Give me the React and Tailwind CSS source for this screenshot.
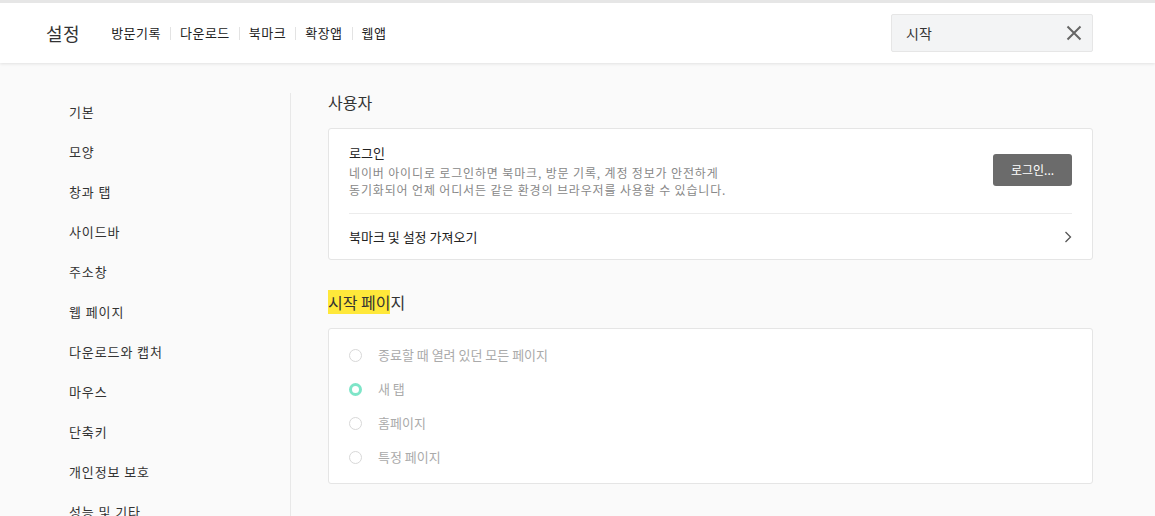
import React, { useState } from 'react';

const font = { fontFamily: '"Noto Sans CJK KR", "Noto Sans", sans-serif' };

const navItems = ['방문기록', '다운로드', '북마크', '확장앱', '웹앱'];
const sideItems = ['기본', '모양', '창과 탭', '사이드바', '주소창', '웹 페이지', '다운로드와 캡처', '마우스', '단축키', '개인정보 보호', '성능 및 기타'];
const startOptions = ['종료할 때 열려 있던 모든 페이지', '새 탭', '홈페이지', '특정 페이지'];

export default function App() {
  const [query, setQuery] = useState('시작');
  const [start, setStart] = useState(1);

  return (
    <div className="w-[1155px] h-[516px] overflow-hidden bg-[#fafafa] text-[#222]" style={font}>
      {/* Header */}
      <div className="h-[63px] bg-white border-t-[3px] border-[#e6e6e6] shadow-[0_1px_3px_rgba(0,0,0,0.1)] flex items-center pl-[46px] pr-[62px] relative z-10">
        <h1 className="text-[18px] text-[#333] mr-[31px] leading-none tracking-[0.5px]">설정</h1>
        <nav className="flex items-center text-[13px] text-[#222] tracking-[0.5px]">
          {navItems.map((n, i) => (
            <React.Fragment key={n}>
              {i > 0 && <span className="w-px h-[13px] bg-[#e3e3e3] mx-[9px]" />}
              <span className="cursor-pointer">{n}</span>
            </React.Fragment>
          ))}
        </nav>
        <div className="ml-auto w-[202px] h-[38px] bg-[#f3f4f5] border border-[#e6e6e6] rounded-[2px] flex items-center pl-[14px] pr-[8px]">
          <input
            value={query}
            onChange={(e) => setQuery(e.target.value)}
            className="flex-1 bg-transparent outline-none text-[14px] text-[#333] min-w-0"
            style={font}
          />
          <button onClick={() => setQuery('')} className="w-[20px] h-[20px] flex items-center justify-center text-[#666]">
            <svg width="16" height="16" viewBox="0 0 16 16" fill="none" stroke="currentColor" strokeWidth="2">
              <path d="M1.5 1.5 L14.5 14.5 M14.5 1.5 L1.5 14.5" />
            </svg>
          </button>
        </div>
      </div>

      <div className="flex">
        {/* Sidebar */}
        <aside className="w-[291px] shrink-0 pl-[69px] mt-[30px] border-r border-[#e8e8e8]">
          <ul className="flex flex-col -mt-[1px]">
            {sideItems.map((s) => (
              <li key={s} className="h-[40px] flex items-center text-[13px] text-[#333] tracking-[0.9px] cursor-pointer">{s}</li>
            ))}
          </ul>
        </aside>

        {/* Content */}
        <main className="flex-1 pl-[37px] pr-[62px] pt-[27px]">
          <h2 className="text-[16px] text-[#333] leading-[24px] mb-[14px]">사용자</h2>
          <div className="bg-white border border-[#e5e5e5] rounded-[3px] px-[20px]">
            <div className="flex items-center justify-between pt-[14px] pb-[15px] border-b border-[#ececec]">
              <div>
                <div className="text-[13px] text-[#222] leading-[20px]">로그인</div>
                <div className="text-[12px] text-[#888] leading-[17px] mt-[1px] tracking-[0.85px]">
                  네이버 아이디로 로그인하면 북마크, 방문 기록, 계정 정보가 안전하게<br />
                  동기화되어 언제 어디서든 같은 환경의 브라우저를 사용할 수 있습니다.
                </div>
              </div>
              <button className="w-[79px] h-[32px] bg-[#6b6b6b] text-white text-[12px] rounded-[3px] -mt-[1px]">로그인...</button>
            </div>
            <div className="h-[45px] flex items-center justify-between text-[13px] text-[#222] cursor-pointer">
              <span>북마크 및 설정 가져오기</span>
              <svg width="8" height="12" viewBox="0 0 8 12" fill="none" stroke="#555" strokeWidth="1.3">
                <path d="M1.5 1 L6.5 6 L1.5 11" />
              </svg>
            </div>
          </div>

          <h2 className="text-[16px] text-[#333] leading-[24px] mt-[30px] mb-[14px]">
            <span className="bg-[#ffe83a]">시작 페이</span>지
          </h2>
          <div className="bg-white border border-[#e5e5e5] rounded-[3px] px-[20px] py-[9px]">
            {startOptions.map((o, i) => (
              <label key={o} className="h-[34px] flex items-center cursor-pointer" onClick={() => setStart(i)}>
                <span className={`w-[13px] h-[13px] rounded-full mr-[16px] ${start === i ? 'border-[3px] border-[#7ee5c8]' : 'border border-[#d8d8d8]'}`} />
                <span className="text-[13px] text-[#aaa]">{o}</span>
              </label>
            ))}
          </div>
        </main>
      </div>
    </div>
  );
}
